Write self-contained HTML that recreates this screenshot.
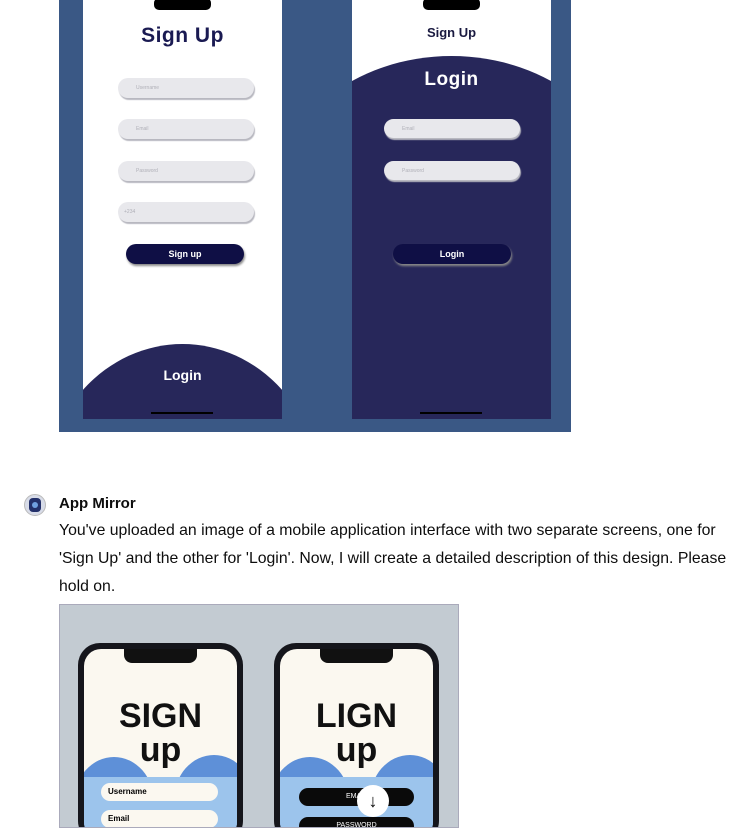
<!DOCTYPE html>
<html><head><meta charset="utf-8"><style>
*{margin:0;padding:0;box-sizing:border-box}
body{width:750px;height:828px;overflow:hidden;background:#fff;font-family:"Liberation Sans",sans-serif;position:relative}
.a{position:absolute}
.inp{position:absolute;background:#e8e8ec;border-radius:10px;box-shadow:1px 2px 1px #b8b8c0;font-size:5px;color:#b0b0b8;padding:7px 0 0 18px}
.btn{position:absolute;border-radius:10px;background:#0f0f45;color:#fff;font-size:9px;font-weight:bold;text-align:center;line-height:20px;box-shadow:1px 2px 2px #888}
p.t{position:absolute;left:59px;width:680px;font-size:15.8px;line-height:28px;color:#0d0d0d}
</style></head><body>
<div class="a" style="left:59px;top:0;width:512px;height:432px;background:#3a5885"></div>
<!-- left phone -->
<div class="a" style="left:83px;top:0;width:199px;height:419px;background:#fff;overflow:hidden">
 <div class="a" style="left:71px;top:-2px;width:57px;height:12px;background:#000;border-radius:5px"></div>
 <div class="a" style="left:24px;top:-5px;font-size:7px;font-weight:bold">11:30</div>
 <div class="a" style="left:0;top:24px;width:199px;text-align:center;font-size:21px;font-weight:bold;color:#1a1a52;letter-spacing:0.5px">Sign Up</div>
 <div class="inp" style="left:35px;top:78px;width:136px;height:20px">Username</div>
 <div class="inp" style="left:35px;top:119px;width:136px;height:20px">Email</div>
 <div class="inp" style="left:35px;top:161px;width:136px;height:20px">Password</div>
 <div class="inp" style="left:35px;top:202px;width:136px;height:20px;padding-left:6px">+234</div>
 <div class="btn" style="left:43px;top:244px;width:118px;height:20px">Sign up</div>
 <div class="a" style="left:-40px;top:344px;width:279px;height:306px;border-radius:50%;background:#27275a"></div>
 <div class="a" style="left:0;top:367px;width:199px;text-align:center;color:#fff;font-size:14px;font-weight:bold">Login</div>
 <div class="a" style="left:68px;top:412px;width:62px;height:2px;background:#000"></div>
</div>
<!-- right phone -->
<div class="a" style="left:352px;top:0;width:199px;height:419px;background:#fff;overflow:hidden">
 <div class="a" style="left:-80px;top:56px;width:359px;height:298px;border-radius:50%;background:#27275a"></div>
 <div class="a" style="left:0;top:150px;width:199px;height:270px;background:#27275a"></div>
 <div class="a" style="left:71px;top:-2px;width:57px;height:12px;background:#000;border-radius:5px"></div>
 <div class="a" style="left:24px;top:-5px;font-size:7px;font-weight:bold">11:30</div>
 <div class="a" style="left:0;top:25px;width:199px;text-align:center;font-size:13px;font-weight:bold;color:#1a1a40">Sign Up</div>
 <div class="a" style="left:0;top:69px;width:199px;text-align:center;font-size:19px;font-weight:bold;color:#fff;letter-spacing:0.5px">Login</div>
 <div class="inp" style="left:32px;top:119px;width:136px;height:19px">Email</div>
 <div class="inp" style="left:32px;top:161px;width:136px;height:19px">Password</div>
 <div class="btn" style="left:41px;top:244px;width:118px;height:20px;background:#0f0f45">Login</div>
 <div class="a" style="left:68px;top:412px;width:62px;height:2px;background:#000"></div>
</div>
<!-- avatar -->
<div class="a" style="left:24px;top:494px;width:22px;height:22px;border-radius:50%;background:#d8dce8;border:1px solid #bbb"></div>
<div class="a" style="left:29px;top:498px;width:12px;height:14px;border-radius:4px;background:#23306a"></div>
<div class="a" style="left:32px;top:502px;width:6px;height:6px;border-radius:50%;background:#6fa0e0"></div>
<div class="a" style="left:59px;top:495px;font-size:15px;font-weight:bold;color:#0d0d0d">App Mirror</div>
<p class="t" style="top:517px">You've uploaded an image of a mobile application interface with two separate screens, one for 'Sign Up' and the other for 'Login'. Now, I will create a detailed description of this design. Please hold on.</p>
<!-- bottom image -->
<div class="a" style="left:59px;top:604px;width:400px;height:224px;background:#c3cbd2;border:1px solid #aab;overflow:hidden">
 <div class="a" style="left:18px;top:38px;width:165px;height:200px;border-radius:22px;background:#15161c"></div>
 <div class="a" style="left:24px;top:44px;width:153px;height:190px;border-radius:17px;background:#fbf8f0;overflow:hidden">
  <div class="a" style="left:40px;top:0;width:73px;height:14px;background:#111;border-radius:0 0 8px 8px"></div>
  <div class="a" style="left:0;top:50px;width:153px;text-align:center;font-size:34px;font-weight:900;line-height:34px;color:#111">SIGN<br>up</div>
  <div class="a" style="left:-10px;top:108px;width:80px;height:90px;border-radius:50%;background:#5e90d8"></div>
  <div class="a" style="left:90px;top:106px;width:80px;height:90px;border-radius:50%;background:#5e90d8"></div>
  <div class="a" style="left:0;top:128px;width:153px;height:80px;background:#9cc4ec"></div>
  <div class="a" style="left:17px;top:134px;width:117px;height:18px;border-radius:9px;background:#fbf8f0;font-size:8px;font-weight:bold;line-height:18px;padding-left:7px">Username</div>
  <div class="a" style="left:17px;top:161px;width:117px;height:18px;border-radius:9px;background:#fbf8f0;font-size:8px;font-weight:bold;line-height:18px;padding-left:7px">Email</div>
 </div>
 <div class="a" style="left:214px;top:38px;width:165px;height:200px;border-radius:22px;background:#15161c"></div>
 <div class="a" style="left:220px;top:44px;width:153px;height:190px;border-radius:17px;background:#fbf8f0;overflow:hidden">
  <div class="a" style="left:40px;top:0;width:73px;height:14px;background:#111;border-radius:0 0 8px 8px"></div>
  <div class="a" style="left:0;top:50px;width:153px;text-align:center;font-size:34px;font-weight:900;line-height:34px;color:#111">LIGN<br>up</div>
  <div class="a" style="left:-10px;top:108px;width:80px;height:90px;border-radius:50%;background:#5e90d8"></div>
  <div class="a" style="left:90px;top:106px;width:80px;height:90px;border-radius:50%;background:#5e90d8"></div>
  <div class="a" style="left:0;top:128px;width:153px;height:80px;background:#9cc4ec"></div>
  <div class="a" style="left:19px;top:139px;width:115px;height:18px;border-radius:9px;background:#0a0a0a;color:#fff;font-size:7px;line-height:18px;text-align:center">EMAIL</div>
  <div class="a" style="left:19px;top:168px;width:115px;height:18px;border-radius:9px;background:#0a0a0a;color:#fff;font-size:7px;line-height:18px;text-align:center">PASSWORD</div>
 </div>
</div>
<div class="a" style="left:357px;top:785px;width:32px;height:32px;border-radius:50%;background:#fff;text-align:center;line-height:32px;font-size:18px;color:#000">↓</div>
</body></html>
